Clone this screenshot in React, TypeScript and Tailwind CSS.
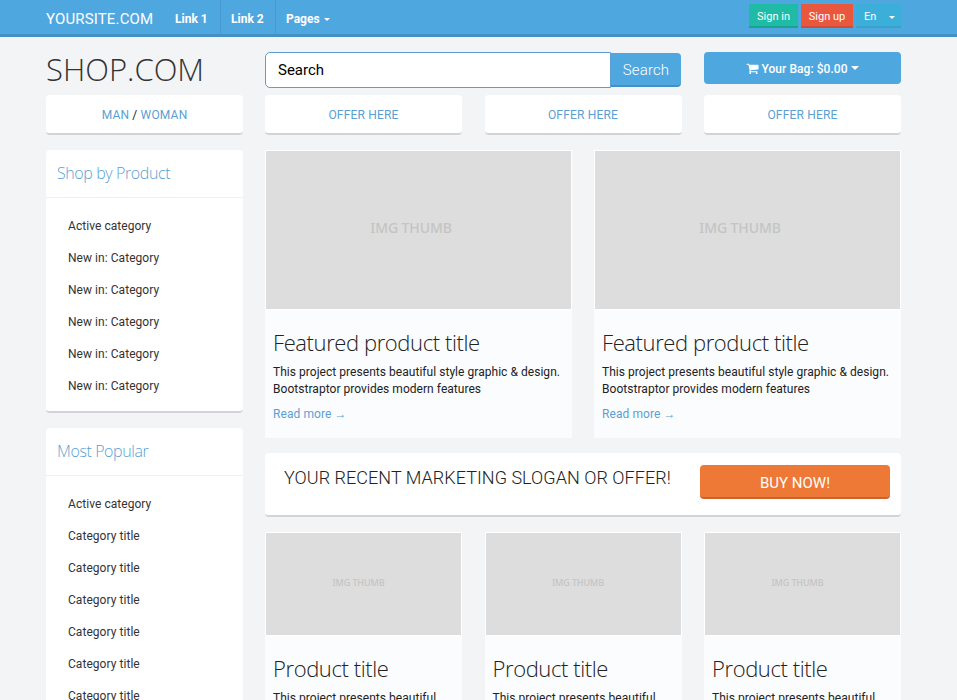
import type { ReactNode } from "react";

const shopByProduct = [
  "Active category",
  "New in: Category",
  "New in: Category",
  "New in: Category",
  "New in: Category",
  "New in: Category",
];

const mostPopular = [
  "Active category",
  "Category title",
  "Category title",
  "Category title",
  "Category title",
  "Category title",
  "Category title",
];

function Caret({ className }: { className: string }) {
  return <span className={`inline-block h-0 w-0 border-x-transparent border-t-white ${className}`} />;
}

function CartIcon() {
  return (
    <svg viewBox="0 0 1792 1792" className="h-[13px] w-[13px] shrink-0 fill-white">
      <path d="M704 1536q0 52-38 90t-90 38-90-38-38-90 38-90 90-38 90 38 38 90zm896 0q0 52-38 90t-90 38-90-38-38-90 38-90 90-38 90 38 38 90zm128-1088v512q0 24-16.500 42.500t-40.500 21.500l-1044 122q13 60 13 70 0 16-24 64h920q26 0 45 19t19 45-19 45-45 19h-1024q-26 0-45-19t-19-45q0-11 8-31.500t16-36 21.500-40 15.500-29.500l-177-823h-204q-26 0-45-19t-19-45 19-45 45-19h256q16 0 28.500 6.500t19.500 15.500 13 24.500 8 26 5.500 29.500 4.500 26h1201q26 0 45 19t19 45z" />
    </svg>
  );
}

function Tile({ children }: { children: ReactNode }) {
  return (
    <div className="h-10 rounded-[4px] border-b-2 border-[#d1d3d6] bg-white pt-px text-center text-[12px] leading-[39px] tracking-[0.18px] text-[#5b9fd2]">
      {children}
    </div>
  );
}

function CategoryPanel({ title, items }: { title: string; items: string[] }) {
  return (
    <section className="rounded-[4px] border-b-2 border-[#d1d3d6] bg-white pb-[9px]">
      <h3 className="h-12 border-b border-[#edf1f6] pl-[11px] font-['Open_Sans'] text-[16px] leading-[47px] font-light tracking-[-0.4px] text-[#5b9fd2]">
        {title}
      </h3>
      <ul className="pt-3 pl-[22px]">
        {items.map((item, i) => (
          <li key={i} className="h-8 text-[12px] leading-8 tracking-[0.05px] text-[#333]">
            {item}
          </li>
        ))}
      </ul>
    </section>
  );
}

function ProductCard({ title, large = false }: { title: string; large?: boolean }) {
  return (
    <article className="bg-[#fbfcfe] pb-[15px]">
      <div className="border border-white">
        <div
          className={`flex items-center justify-center bg-[#ddd] font-['Noto_Sans'] text-[#c4c4c4] ${
            large
              ? "h-[158px] pr-[15px] pb-[5px] text-[14px] font-medium tracking-[-0.1px]"
              : "h-[102px] pr-[10px] pb-[2px] text-[9px] font-medium tracking-[-0.1px]"
          }`}
        >
          IMG THUMB
        </div>
      </div>
      <div className="px-2 pt-[15px]">
        <h2 className="font-['Open_Sans'] text-[22px] leading-[34px] font-light tracking-[-0.4px] text-[#222]">
          {title}
        </h2>
        <p className="-mr-1 pt-[5px] text-[12px] leading-[17px] tracking-[0.04px] text-[#222]">
          This project presents beautiful style graphic &amp; design. Bootstraptor provides modern features
        </p>
        <a className="mt-2 block text-[12px] leading-[17px] tracking-[0.08px] text-[#5b9fd2]">
          Read more <span className="font-['Liberation_Sans'] leading-none">→</span>
        </a>
      </div>
    </article>
  );
}

export default function App() {
  return (
    <div className="h-[700px] w-[957px] overflow-hidden bg-[#f3f4f6] font-['Roboto',sans-serif] text-[#222]">
      <nav className="flex h-[37px] border-b-[3px] border-[#4590c2] bg-[#4fa7e0] pr-[56px] pl-[46px] text-white">
        <div className="w-[119px] pt-px text-[15px] leading-[37px] tracking-[0.15px]">YOURSITE.COM</div>
        <div className="flex h-[34px] text-[12px] leading-[38px] font-bold">
          <a className="w-[56px] border-r border-[#4799d1] pl-[10px]">Link 1</a>
          <a className="w-[55px] border-r border-[#4799d1] pl-[10px]">Link 2</a>
          <a className="flex pl-[10px]">
            Pages
            <Caret className="mt-[18px] ml-[4px] border-x-[3px] border-t-[3px]" />
          </a>
        </div>
        <div className="mt-1 ml-auto flex h-6 gap-[3px] text-[11px] leading-6">
          <button className="w-[49px] border-b-2 border-[#1ba390] bg-[#1fbba6] pt-px">Sign in</button>
          <button className="w-[52px] border-b-2 border-[#cf4d37] bg-[#e9573f] pt-px">Sign up</button>
          <button className="flex w-[45px] items-center justify-between border-b-2 border-[#38a2cb] bg-[#3bafda] pt-[3px] pr-[6px] pl-2">
            En
            <Caret className="mt-[2px] border-x-[3px] border-t-[3px]" />
          </button>
        </div>
      </nav>

      <div className="mr-[56px] ml-[46px] grid grid-cols-[197px_636px] gap-x-[22px] pt-[15px]">
        <aside>
          <h1 className="h-[43px] font-['Open_Sans'] text-[31px] leading-[35px] font-light text-[#333]">SHOP.COM</h1>
          <Tile>
            MAN <span className="text-[#222]">/</span> WOMAN
          </Tile>
          <div className="mt-[15px] flex flex-col gap-[15px]">
            <CategoryPanel title="Shop by Product" items={shopByProduct} />
            <CategoryPanel title="Most Popular" items={mostPopular} />
          </div>
        </aside>

        <main>
          <div className="flex h-[43px] items-start justify-between">
            <div className="flex w-[416px] items-start">
              <div className="h-9 w-[346px] rounded-l-[5px] border border-[#5b9fd2] bg-white pl-3 text-[15px] leading-[34px] text-black">
                Search
              </div>
              <button className="mt-px h-[34px] w-[70px] rounded-r-[4px] border-b-2 border-[#4590c2] bg-[#4fa7e0] pt-px text-[15px] leading-8 font-light tracking-[0.15px] text-white">
                Search
              </button>
            </div>
            <button className="flex h-8 w-[197px] items-center justify-center rounded-[4px] bg-[#4fa7e0] text-[12px] font-medium text-white">
              <CartIcon />
              <span className="ml-[2px] pt-px tracking-[0.05px]">Your Bag: $0.00</span>
              <Caret className="ml-[3px] border-x-[4px] border-t-[4px]" />
            </button>
          </div>

          <div className="grid grid-cols-[197px_197px_197px] justify-between">
            <Tile>OFFER HERE</Tile>
            <Tile>OFFER HERE</Tile>
            <Tile>OFFER HERE</Tile>
          </div>

          <div className="mt-[15px] grid grid-cols-2 gap-[22px]">
            <ProductCard title="Featured product title" large />
            <ProductCard title="Featured product title" large />
          </div>

          <section className="mt-[15px] flex h-16 items-start justify-between rounded-[4px] border-b-2 border-[#d1d3d6] bg-white pt-3 pr-[11px] pl-[19px]">
            <h2 className="text-[18px] leading-[26px] font-light tracking-[0.04px] whitespace-nowrap text-[#222]">
              YOUR RECENT MARKETING SLOGAN OR OFFER!
            </h2>
            <button className="h-[34px] w-[190px] rounded-[4px] border-b-2 border-[#c9632f] bg-[#ee7835] pt-[2px] text-[15px] leading-8 text-white">
              BUY NOW!
            </button>
          </section>

          <div className="mt-[15px] grid grid-cols-[197px_197px_197px] justify-between">
            <ProductCard title="Product title" />
            <ProductCard title="Product title" />
            <ProductCard title="Product title" />
          </div>
        </main>
      </div>
    </div>
  );
}
